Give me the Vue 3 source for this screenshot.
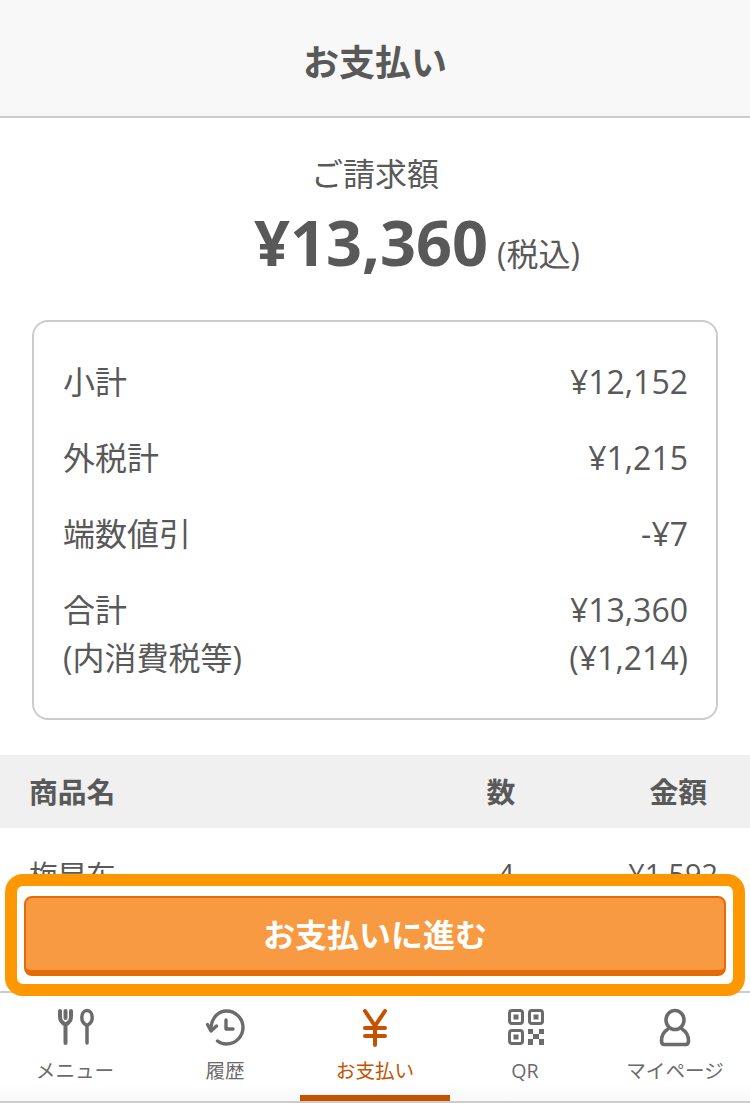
<script setup>
const rows = [
  { label: '小計', value: '¥12,152' },
  { label: '外税計', value: '¥1,215' },
  { label: '端数値引', value: '-¥7' },
]
const tabs = ['メニュー', '履歴', 'お支払い', 'QR', 'マイページ']
</script>

<template>
  <div class="page">
    <header class="head">お支払い</header>
    <section class="bill">
      <div class="bill-label">ご請求額</div>
      <div class="bill-amount"><strong>¥13,360</strong><span>(税込)</span></div>
    </section>
    <section class="card">
      <div v-for="r in rows" :key="r.label" class="line">
        <span>{{ r.label }}</span><span>{{ r.value }}</span>
      </div>
      <div class="line total">
        <span>合計<br>(内消費税等)</span>
        <span class="right">¥13,360<br>(¥1,214)</span>
      </div>
    </section>
    <div class="thead">
      <span class="c-name">商品名</span><span class="c-num">数</span><span class="c-price">金額</span>
    </div>
    <div class="trow">
      <span class="c-name">梅昆布</span><span class="c-num">4</span><span class="c-price">¥1,592</span>
    </div>

    <div class="dock">
      <div class="action">
        <div class="highlight"></div>
        <button class="pay">お支払いに進む</button>
      </div>
      <nav class="tabs">
        <div v-for="(t, i) in tabs" :key="t" class="tab" :class="{ on: i === 2 }">
          <svg v-if="i === 0" viewBox="0 0 40 40" width="40" height="40" fill="none" stroke="currentColor" stroke-width="4" stroke-linecap="round" stroke-linejoin="round">
            <path d="M5 3v5.500c0 4.500 2 6.500 5.500 8 3.500-1.500 5.500-3.500 5.500-8V3M10.500 3v7M10.500 17v18"/>
            <path stroke-width="3.500" d="M32 2.500c-3 0-5.200 3-5.200 7 0 4 2 6.500 5.200 8 3.200-1.500 5.200-4 5.200-8 0-4-2.200-7-5.200-7zM32 17.500V35"/>
          </svg>
          <svg v-else-if="i === 1" viewBox="0 0 40 40" width="40" height="40" fill="none" stroke="currentColor" stroke-width="3.400" stroke-linecap="round" stroke-linejoin="round">
            <path d="M6 19C7 10 13 3 21.500 3c9 0 16.500 7.500 16.500 16.500S30.500 36 21.500 36c-3.500 0-6.500-1-9-3"/>
            <path d="M2.500 16.500 6 23l5.500-5"/>
            <path d="M21 12v9h7"/>
          </svg>
          <svg v-else-if="i === 2" viewBox="0 0 40 40" width="40" height="40" fill="none" stroke="currentColor" stroke-width="4" stroke-linecap="round" stroke-linejoin="round">
            <path d="M10 3l10 15L30 3M20 18v19M10 20h20M10 28h20"/>
          </svg>
          <svg v-else-if="i === 3" viewBox="0 0 40 40" width="40" height="40" fill="currentColor">
            <g fill="none" stroke="currentColor" stroke-width="3">
              <rect x="4.500" y="2.500" width="13" height="13" rx="2.500"/>
              <rect x="24.500" y="2.500" width="13" height="13" rx="2.500"/>
              <rect x="4.500" y="22.500" width="13" height="13" rx="2.500"/>
            </g>
            <rect x="8.500" y="6.500" width="5" height="5"/>
            <rect x="28.500" y="6.500" width="5" height="5"/>
            <rect x="8.500" y="26.500" width="5" height="5"/>
            <path d="M23 21h5v5h-5zM34 21h5v5h-5zM28 26h6v5h-6zM23 31h5v6h-5zM34 31h5v6h-5z"/>
          </svg>
          <svg v-else viewBox="0 0 40 40" width="40" height="40" fill="none" stroke="currentColor" stroke-width="3.600" stroke-linecap="round" stroke-linejoin="round">
            <ellipse cx="20" cy="12" rx="9" ry="9.500"/>
            <path d="M13 21C8 24 6.500 29 6.500 33c0 2.500 1 3.500 3 3.500h21c2 0 3-1 3-3.500 0-4-1.500-9-6.500-12"/>
          </svg>
          <span class="tab-label">{{ t }}</span>
        </div>
      </nav>
    </div>
  </div>
</template>

<style>
html, body { margin: 0; background: #fff; }
</style>

<style scoped>
.page {
  position: relative;
  width: 750px;
  height: 1103px;
  overflow: hidden;
  background: #fff;
  color: #595959;
  font-family: "Open Sans", "Noto Sans CJK JP", sans-serif;
}
.head {
  padding-top: 4px;
  display: flex;
  align-items: center;
  justify-content: center;
  height: 112px;
  background: #f8f8f8;
  border-bottom: 2px solid #ccc;
  font-size: 36px;
  font-weight: 700;
}
.bill { height: 202px; padding-top: 36px; box-sizing: border-box; text-align: center; }
.bill-label { font-size: 32px; line-height: 40px; }
.bill-amount {
  margin-top: 10px;
  line-height: 76px;
  display: flex;
  justify-content: center;
  align-items: baseline;
  gap: 9px;
  padding-left: 84px;
}
.bill-amount strong { font-size: 63px; font-weight: 700; }
.bill-amount span { font-size: 32px; }
.card {
  margin: 0 32px;
  height: 400px;
  box-sizing: border-box;
  border: 2px solid #ccc;
  border-radius: 16px;
  padding: 36px 28px 0 29px;
  font-size: 32px;
  line-height: 48px;
}
.line { display: flex; justify-content: space-between; margin-bottom: 28px; }
.total { margin-bottom: 0; }
.right { text-align: right; }
.thead, .trow { display: flex; align-items: center; }
.thead {
  margin-top: 35px;
  height: 73px;
  box-sizing: border-box;
  padding: 0 43px 3px 29px;
  background: #f0f0f0;
  font-size: 28.8px;
  font-weight: 700;
}
.trow {
  height: 52px;
  box-sizing: border-box;
  padding: 40px 32px 0 29px;
  border-bottom: 2px solid #ccc;
  font-size: 28.8px;
}
.c-name { flex: 1; }
.c-num { width: 30px; text-align: center; }
.thead .c-num { margin-right: 41px; }
.trow .c-num { margin-right: 47px; }
.c-price { width: 150px; text-align: right; }
.dock {
  position: absolute;
  left: 0;
  right: 0;
  bottom: 0;
  background: #fff;
}
.action {
  position: relative;
  height: 115px;
  padding: 18px 24px 0;
  box-sizing: border-box;
  background: #fff;
  border-bottom: 2px solid #ccc;
}
.highlight {
  position: absolute;
  left: 5px;
  right: 5px;
  top: -4px;
  height: 122px;
  box-sizing: border-box;
  border: 12px solid #ff9800;
  border-radius: 18px;
  z-index: 2;
}
.pay {
  display: block;
  width: 100%;
  height: 80px;
  padding: 0 0 2px;
  border: 2px solid #e46c08;
  border-bottom-width: 6px;
  border-radius: 8px;
  background: #f89a41;
  color: #fff;
  font: 700 32px "Open Sans", "Noto Sans CJK JP", sans-serif;
}
.tabs {
  display: grid;
  grid-template-columns: repeat(5, 1fr);
  height: 110px;
  background: linear-gradient(#fff 85%, #f8f8f8);
  border-bottom: 2px solid #ccc;
  box-sizing: border-box;
}
.tab {
  display: flex;
  flex-direction: column;
  align-items: center;
  padding-top: 15px;
  color: #6b6b6b;
  box-sizing: border-box;
}
.tab.on { color: #c55200; border-bottom: 6px solid #c55200; }
.tab-label { font-size: 19.6px; line-height: 30px; margin-top: 8px; white-space: nowrap; }
</style>
